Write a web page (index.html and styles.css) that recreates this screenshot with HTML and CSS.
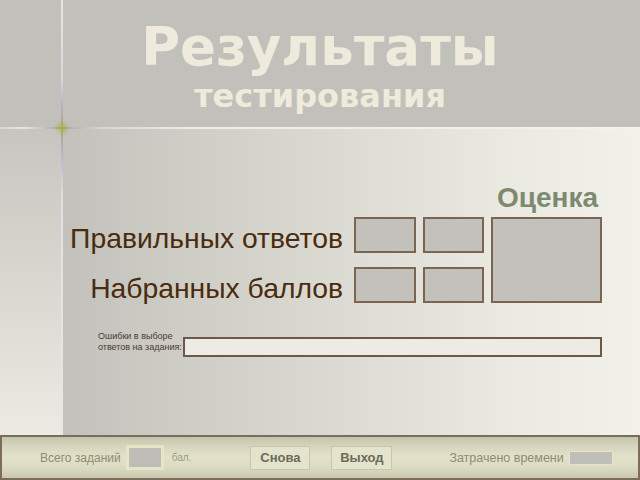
FILE: index.html
```html
<!DOCTYPE html>
<html lang="ru">
<head>
<meta charset="utf-8">
<title>Результаты тестирования</title>
<link rel="stylesheet" href="styles.css">
</head>
<body>
<div class="page">
  <header class="head">
    <h1 class="title">Результаты</h1>
    <h2 class="subtitle">тестирования</h2>
  </header>
  <main class="body">
    <aside class="strip"></aside>
    <section class="content">
      <div class="grade-title">Оценка</div>
      <div class="score-grid">
        <div class="label">Правильных ответов</div>
        <div class="cell"></div>
        <div class="cell"></div>
        <div class="cell big"></div>
        <div class="label">Набранных баллов</div>
        <div class="cell"></div>
        <div class="cell"></div>
      </div>
      <div class="errors">
        <div class="errors-label">Ошибки в выборе<br>ответов на задания:</div>
        <div class="errors-field"></div>
      </div>
    </section>
  </main>
  <footer class="bar">
    <span class="bar-text total">Всего заданий</span>
    <span class="total-box"></span>
    <span class="unit">бал.</span>
    <span class="btn again">Снова</span>
    <span class="btn exit">Выход</span>
    <span class="bar-text spent">Затрачено времени</span>
    <span class="time-box"></span>
  </footer>
  <div class="line-h"></div>
  <div class="line-v"></div>
  <div class="glow"></div>
</div>
</body>
</html>
```
FILE: styles.css
```css
html, body {
  margin: 0;
  padding: 0;
}
body {
  width: 640px;
  height: 480px;
  overflow: hidden;
  font-family: "Liberation Sans", Arial, sans-serif;
}
.page {
  position: relative;
  width: 640px;
  height: 480px;
  display: flex;
  flex-direction: column;
  background: #c1c0ba;
}
.head {
  height: 128px;
  background: #c1c0ba;
  text-align: center;
  font-family: "DejaVu Sans", sans-serif;
  color: #eeebdc;
  overflow: hidden;
}
.title {
  margin: 18px 0 0;
  font-size: 53px;
  line-height: 57px;
  font-weight: bold;
}
.subtitle {
  margin: 3px 0 0;
  font-size: 32px;
  line-height: 36px;
  font-weight: bold;
}
.body {
  height: 307px;
  display: flex;
}
.strip {
  width: 62px;
  flex: none;
  background: linear-gradient(180deg, #c6c5bf 0%, #d6d5ce 45%, #ecebe3 100%);
}
.content {
  flex: 1;
  padding: 55px 38px 0 0;
  background: linear-gradient(90deg, #c2c1bb 0%, #cdccc5 20%, #dddcd4 50%, #ebeae2 78%, #f3f2ea 100%);
}
.grade-title {
  text-align: right;
  padding-right: 4px;
  font-size: 28px;
  line-height: 30px;
  font-weight: bold;
  color: #7b8a70;
  margin-bottom: 4px;
}
.score-grid {
  display: grid;
  grid-template-columns: 1fr 62px 61px 111px;
  grid-template-rows: 36px 36px;
  column-gap: 7px;
  row-gap: 14px;
}
.label {
  text-align: right;
  padding: 6px 4px 0 0;
  font-size: 28.3px;
  line-height: 30px;
  color: #4b2b0e;
  white-space: nowrap;
}
.cell {
  box-sizing: border-box;
  border: 2px solid #7c6450;
  background: #c2c1bb;
}
.cell.big {
  grid-column: 4;
  grid-row: 1 / span 2;
}
.errors {
  display: flex;
  align-items: flex-start;
  margin-top: 28px;
  padding-left: 36px;
}
.errors-label {
  width: 85px;
  flex: none;
  font-size: 9px;
  line-height: 11px;
  color: #4a3c2e;
  white-space: nowrap;
}
.errors-field {
  flex: 1;
  box-sizing: border-box;
  height: 20px;
  margin-top: 6px;
  border: 2px solid #6b5a48;
  background: #ecebe4;
}
.bar {
  height: 45px;
  box-sizing: border-box;
  border: 2px solid #7d6c5a;
  display: flex;
  align-items: center;
  padding-left: 38px;
  background: linear-gradient(180deg, #c4c3ac 0%, #d8d7be 25%, #e2e1c9 50%, #dcdbc2 75%, #c9c8b0 100%);
}
.bar-text {
  font-size: 12px;
  color: #8b8c72;
  white-space: nowrap;
}
.spent {
  font-size: 12.5px;
  margin-left: 57px;
}
.total-box {
  box-sizing: border-box;
  width: 38px;
  height: 25px;
  margin-left: 5px;
  border: 3px solid #e7e5c6;
  background: #bebdb8;
}
.unit {
  margin-left: 8px;
  font-size: 10px;
  color: #9a9b80;
}
.btn {
  box-sizing: border-box;
  width: 60px;
  height: 24px;
  display: flex;
  align-items: center;
  justify-content: center;
  border: 1px solid #c9c7a8;
  background: #e4e3cc;
  font-size: 13px;
  font-weight: bold;
  color: #6c6c59;
}
.again {
  margin-left: 59px;
}
.exit {
  margin-left: 21px;
  width: 61px;
}
.time-box {
  box-sizing: border-box;
  width: 44px;
  height: 14px;
  margin-left: 5px;
  border: 1px solid #e6e4cc;
  background: #bfbfba;
}
.line-h {
  position: absolute;
  left: 0;
  top: 127px;
  width: 640px;
  height: 2px;
  background: linear-gradient(90deg, #d8d8d8 0%, #e4e4e4 4%, #b4b4c4 8%, #a8a878 9.7%, #b4b4c4 11.5%, #d6d6dc 16%, #ececea 30%, #f2f2ee 100%);
}
.line-v {
  position: absolute;
  left: 61px;
  top: 0;
  width: 2px;
  height: 435px;
  background: linear-gradient(180deg, #e6e6e6 0%, #d8d8dc 18%, #b4b4c4 24%, #a8a878 29.4%, #b4b4c4 35%, #e0e0e0 45%, #e8e8e6 100%);
}
.glow {
  position: absolute;
  left: 52px;
  top: 118px;
  width: 20px;
  height: 20px;
  background: radial-gradient(circle, rgba(170, 170, 40, 0.55) 0%, rgba(170, 170, 40, 0) 60%);
}
```
